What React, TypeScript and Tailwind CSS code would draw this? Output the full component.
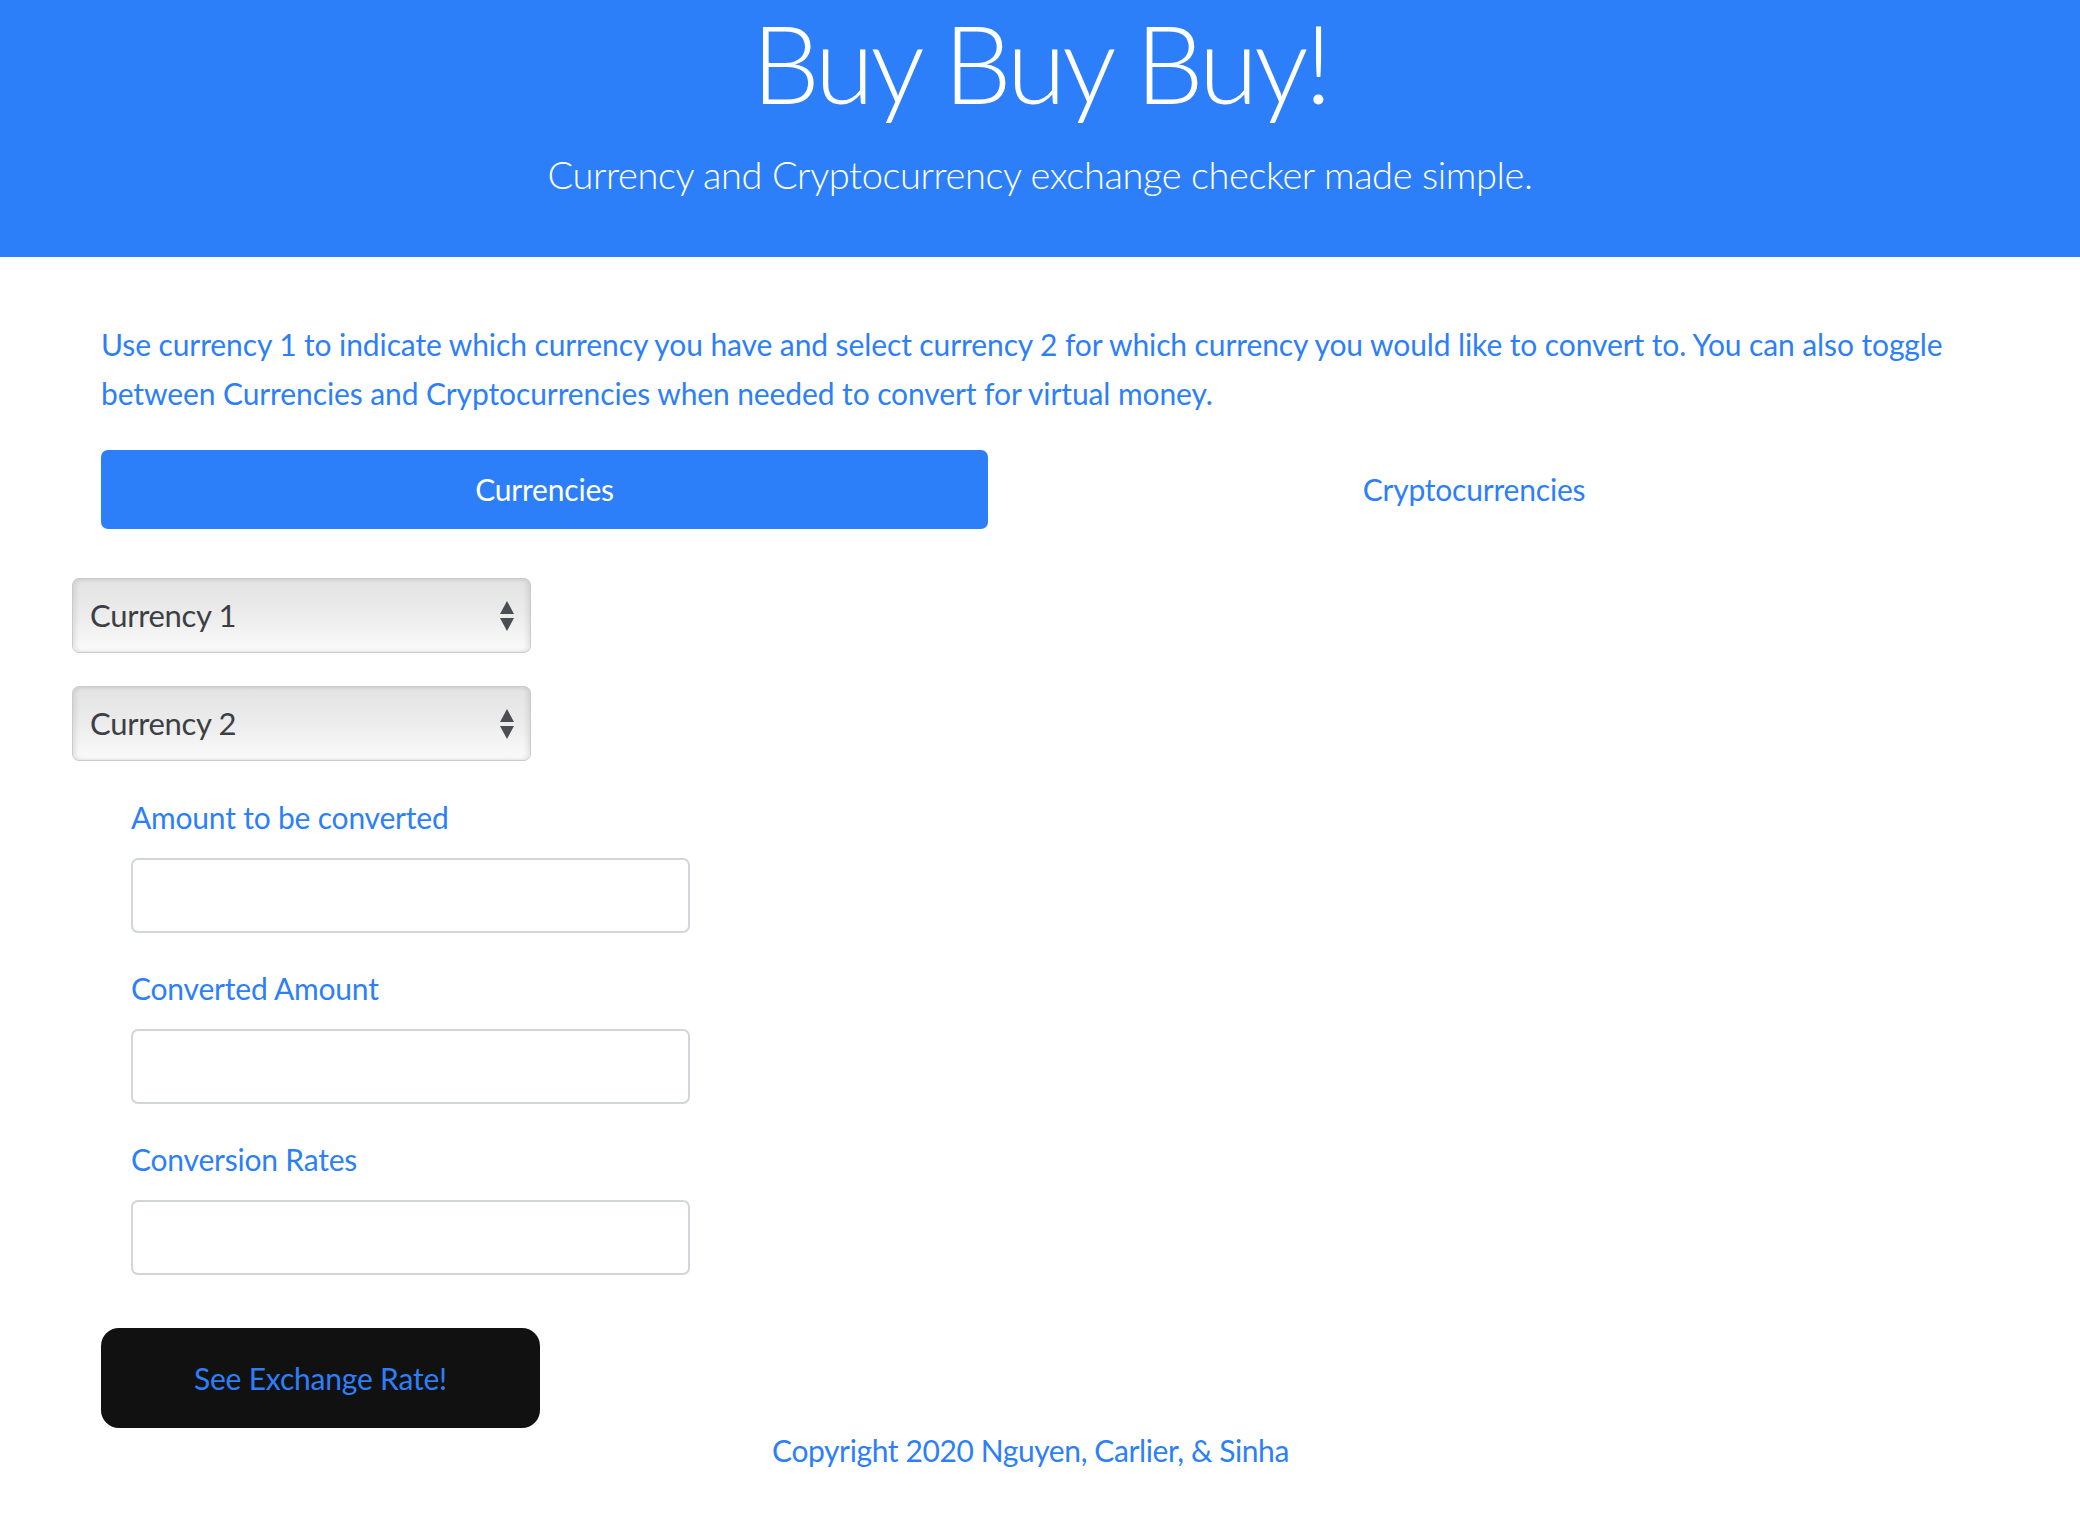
import React from "react";

const font = { fontFamily: "Lato, 'Open Sans', sans-serif" };

function FakeSelect({ label }: { label: string }) {
  return (
    <div className="relative w-[459px] h-[75px] rounded-[7px] border border-[#c9cbce] bg-gradient-to-b from-[#e3e3e3] via-[#ececec] to-[#fbfbfb] shadow-[inset_3px_0_4px_rgba(0,0,0,0.08),inset_-3px_0_4px_rgba(0,0,0,0.08)] flex items-center pl-[17px] pr-[14px]">
      <span className="flex-1 text-[31px] tracking-[-0.3px] text-[#3c3f44] leading-none">{label}</span>
      <svg width="18" height="36" viewBox="0 0 18 36" className="shrink-0">
        <polygon points="9,3 16,16 2,16" fill="#4a4d52" />
        <polygon points="2,20 16,20 9,33" fill="#4a4d52" />
      </svg>
    </div>
  );
}

function Field({ label }: { label: string }) {
  return (
    <div className="ml-[30px] flex flex-col">
      <label className="text-[30px] tracking-[-0.2px] leading-[48px] text-[#2d7ff9]">{label}</label>
      <div className="mt-[17px] w-[559px] h-[75px] rounded-[7px] border-2 border-[#d2d5da] bg-white" />
    </div>
  );
}

export default function App() {
  return (
    <div className="min-h-[1526px] bg-white" style={font}>
      <header className="h-[257px] bg-[#2d7ff9] flex flex-col items-center text-white">
        <h1 className="-mt-[2px] text-[108px] font-light leading-[128px] tracking-[-3.8px]">Buy Buy Buy!</h1>
        <p className="mt-[24px] text-[38px] font-light leading-[48px] tracking-[-0.4px]">
          Currency and Cryptocurrency exchange checker made simple.
        </p>
      </header>

      <main className="ml-[101px] w-[1859px]">
        <p className="mt-[63px] text-[30px] leading-[49px] tracking-[-0.1px] text-[#2d7ff9]">
          Use currency 1 to indicate which currency you have and select currency 2 for which currency you would like to convert to. You can also toggle between Currencies and Cryptocurrencies when needed to convert for virtual money.
        </p>

        <nav className="mt-[32px] flex h-[79px]">
          <div className="w-[887px] rounded-[7px] bg-[#2d7ff9] text-white text-[30px] tracking-[-0.2px] flex items-center justify-center">
            Currencies
          </div>
          <div className="flex-1 text-[#2d7ff9] text-[30px] tracking-[-0.2px] flex items-center justify-center">
            Cryptocurrencies
          </div>
        </nav>

        <div className="-ml-[29px] mt-[49px] flex flex-col gap-[33px]">
          <FakeSelect label="Currency 1" />
          <FakeSelect label="Currency 2" />
        </div>

        <div className="mt-[32px] flex flex-col gap-[31px]">
          <Field label="Amount to be converted" />
          <Field label="Converted Amount" />
          <Field label="Conversion Rates" />
        </div>

        <button className="mt-[53px] w-[439px] h-[100px] rounded-[18px] bg-[#111111] text-[#2d7ff9] text-[30px] tracking-[-0.2px]">
          See Exchange Rate!
        </button>

        <footer className="text-center text-[30px] leading-[44px] tracking-[-0.4px] text-[#2d7ff9]">
          Copyright 2020 Nguyen, Carlier, &amp; Sinha
        </footer>
      </main>
    </div>
  );
}
